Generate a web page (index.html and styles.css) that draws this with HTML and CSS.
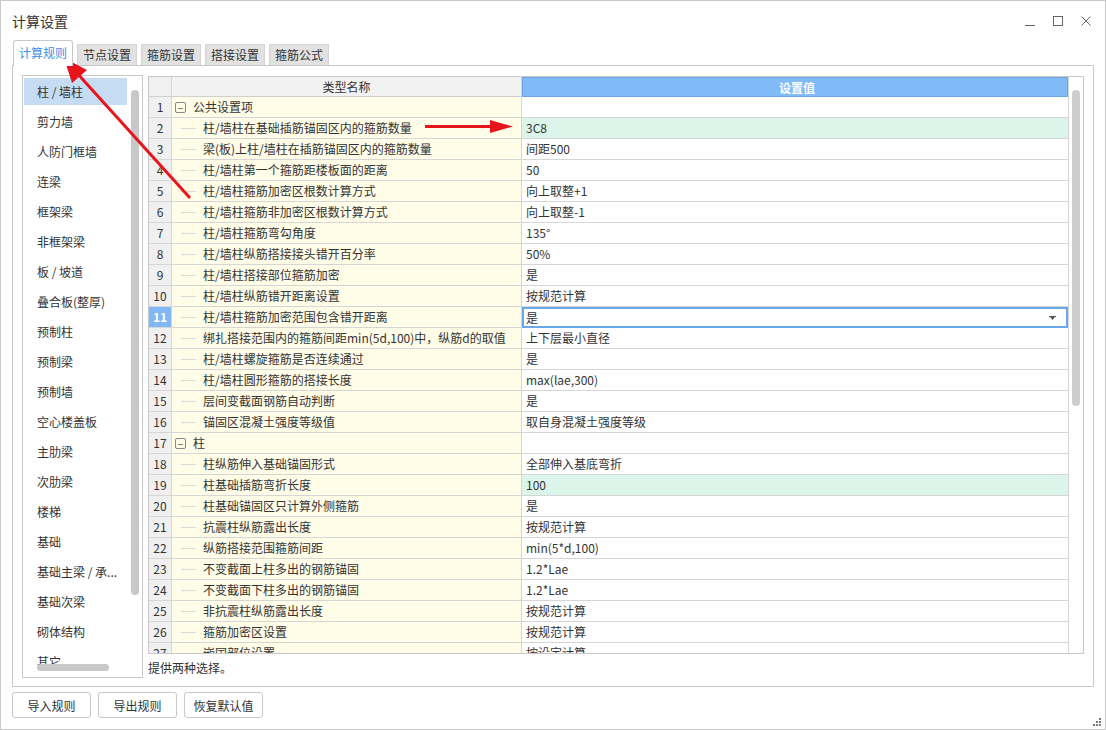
FILE: index.html
```html
<!DOCTYPE html>
<html lang="zh">
<head>
<meta charset="utf-8">
<title>计算设置</title>
<link rel="stylesheet" href="styles.css">
</head>
<body>
<div class="window">
  <div class="titlebar">
    <div class="title">计算设置</div>
    <div class="controls">
      <svg class="ctl" width="14" height="14" viewBox="0 0 14 14"><path d="M2 11.5H12" stroke="#666" stroke-width="1"/></svg>
      <svg class="ctl" width="14" height="14" viewBox="0 0 14 14"><rect x="2.5" y="2.5" width="9" height="9" fill="none" stroke="#666" stroke-width="1"/></svg>
      <svg class="ctl" width="14" height="14" viewBox="0 0 14 14"><path d="M2.5 2.5L11.5 11.5M11.5 2.5L2.5 11.5" stroke="#666" stroke-width="1"/></svg>
    </div>
  </div>
  <div class="tabs">
    <div class="tab active">计算规则</div>
    <div class="tab">节点设置</div>
    <div class="tab">箍筋设置</div>
    <div class="tab">搭接设置</div>
    <div class="tab">箍筋公式</div>
  </div>
  <div class="panel">
    <div class="list">
      <div class="list-items">
        <div class="item selected">柱 / 墙柱</div>
        <div class="item">剪力墙</div>
        <div class="item">人防门框墙</div>
        <div class="item">连梁</div>
        <div class="item">框架梁</div>
        <div class="item">非框架梁</div>
        <div class="item">板 / 坡道</div>
        <div class="item">叠合板(整厚)</div>
        <div class="item">预制柱</div>
        <div class="item">预制梁</div>
        <div class="item">预制墙</div>
        <div class="item">空心楼盖板</div>
        <div class="item">主肋梁</div>
        <div class="item">次肋梁</div>
        <div class="item">楼梯</div>
        <div class="item">基础</div>
        <div class="item">基础主梁 / 承...</div>
        <div class="item">基础次梁</div>
        <div class="item">砌体结构</div>
        <div class="item">其它</div>
      </div>
      <div class="vscroll-l"><div class="thumb-l"></div></div>
      <div class="hscroll-l"><div class="hthumb-l"></div></div>
    </div>
    <div class="right">
      <div class="table">
        <div class="tmain">
          <div class="row head">
            <div class="c-num"></div>
            <div class="c-name hname">类型名称</div>
            <div class="c-val hval">设置值</div>
          </div>
          <div class="tbody">
            <div class="row group"><div class="c-num">1</div><div class="c-name"><span class="box">−</span>公共设置项</div><div class="c-val"></div></div>
            <div class="row"><div class="c-num">2</div><div class="c-name"><span class="line"></span>柱/墙柱在基础插筋锚固区内的箍筋数量</div><div class="c-val green">3C8</div></div>
            <div class="row"><div class="c-num">3</div><div class="c-name"><span class="line"></span>梁(板)上柱/墙柱在插筋锚固区内的箍筋数量</div><div class="c-val">间距500</div></div>
            <div class="row"><div class="c-num">4</div><div class="c-name"><span class="line"></span>柱/墙柱第一个箍筋距楼板面的距离</div><div class="c-val">50</div></div>
            <div class="row"><div class="c-num">5</div><div class="c-name"><span class="line"></span>柱/墙柱箍筋加密区根数计算方式</div><div class="c-val">向上取整+1</div></div>
            <div class="row"><div class="c-num">6</div><div class="c-name"><span class="line"></span>柱/墙柱箍筋非加密区根数计算方式</div><div class="c-val">向上取整-1</div></div>
            <div class="row"><div class="c-num">7</div><div class="c-name"><span class="line"></span>柱/墙柱箍筋弯勾角度</div><div class="c-val">135°</div></div>
            <div class="row"><div class="c-num">8</div><div class="c-name"><span class="line"></span>柱/墙柱纵筋搭接接头错开百分率</div><div class="c-val">50%</div></div>
            <div class="row"><div class="c-num">9</div><div class="c-name"><span class="line"></span>柱/墙柱搭接部位箍筋加密</div><div class="c-val">是</div></div>
            <div class="row"><div class="c-num">10</div><div class="c-name"><span class="line"></span>柱/墙柱纵筋错开距离设置</div><div class="c-val">按规范计算</div></div>
            <div class="row current"><div class="c-num">11</div><div class="c-name"><span class="line"></span>柱/墙柱箍筋加密范围包含错开距离</div><div class="c-val editing">是<svg class="drop" width="7" height="4" viewBox="0 0 7 4"><path d="M0 0H7V1H6L3.5 4L1 1H0Z" fill="#555"/></svg></div></div>
            <div class="row"><div class="c-num">12</div><div class="c-name"><span class="line"></span>绑扎搭接范围内的箍筋间距min(5d,100)中，纵筋d的取值</div><div class="c-val">上下层最小直径</div></div>
            <div class="row"><div class="c-num">13</div><div class="c-name"><span class="line"></span>柱/墙柱螺旋箍筋是否连续通过</div><div class="c-val">是</div></div>
            <div class="row"><div class="c-num">14</div><div class="c-name"><span class="line"></span>柱/墙柱圆形箍筋的搭接长度</div><div class="c-val">max(lae,300)</div></div>
            <div class="row"><div class="c-num">15</div><div class="c-name"><span class="line"></span>层间变截面钢筋自动判断</div><div class="c-val">是</div></div>
            <div class="row"><div class="c-num">16</div><div class="c-name"><span class="line"></span>锚固区混凝土强度等级值</div><div class="c-val">取自身混凝土强度等级</div></div>
            <div class="row group"><div class="c-num">17</div><div class="c-name"><span class="box">−</span>柱</div><div class="c-val"></div></div>
            <div class="row"><div class="c-num">18</div><div class="c-name"><span class="line"></span>柱纵筋伸入基础锚固形式</div><div class="c-val">全部伸入基底弯折</div></div>
            <div class="row"><div class="c-num">19</div><div class="c-name"><span class="line"></span>柱基础插筋弯折长度</div><div class="c-val green">100</div></div>
            <div class="row"><div class="c-num">20</div><div class="c-name"><span class="line"></span>柱基础锚固区只计算外侧箍筋</div><div class="c-val">是</div></div>
            <div class="row"><div class="c-num">21</div><div class="c-name"><span class="line"></span>抗震柱纵筋露出长度</div><div class="c-val">按规范计算</div></div>
            <div class="row"><div class="c-num">22</div><div class="c-name"><span class="line"></span>纵筋搭接范围箍筋间距</div><div class="c-val">min(5*d,100)</div></div>
            <div class="row"><div class="c-num">23</div><div class="c-name"><span class="line"></span>不变截面上柱多出的钢筋锚固</div><div class="c-val">1.2*Lae</div></div>
            <div class="row"><div class="c-num">24</div><div class="c-name"><span class="line"></span>不变截面下柱多出的钢筋锚固</div><div class="c-val">1.2*Lae</div></div>
            <div class="row"><div class="c-num">25</div><div class="c-name"><span class="line"></span>非抗震柱纵筋露出长度</div><div class="c-val">按规范计算</div></div>
            <div class="row"><div class="c-num">26</div><div class="c-name"><span class="line"></span>箍筋加密区设置</div><div class="c-val">按规范计算</div></div>
            <div class="row"><div class="c-num">27</div><div class="c-name"><span class="line"></span>嵌固部位设置</div><div class="c-val">按设定计算</div></div>
          </div>
        </div>
        <div class="vscroll"><div class="thumb"></div></div>
      </div>
      <div class="hint">提供两种选择。</div>
    </div>
  </div>
  <div class="buttons">
    <button class="btn">导入规则</button>
    <button class="btn">导出规则</button>
    <button class="btn">恢复默认值</button>
  </div>
  <svg class="grip" width="8" height="8" viewBox="0 0 8 8"><g fill="#777"><rect x="6" y="0" width="2" height="2"/><rect x="3" y="3" width="2" height="2"/><rect x="6" y="3" width="2" height="2"/><rect x="0" y="6" width="2" height="2"/><rect x="3" y="6" width="2" height="2"/><rect x="6" y="6" width="2" height="2"/></g></svg>
  <svg class="arrows" width="1106" height="730" viewBox="0 0 1106 730">
    <g stroke="#e8141c" stroke-width="3" fill="#e8141c">
      <line x1="190" y1="198" x2="76" y2="72"/>
      <line x1="425" y1="126.5" x2="494" y2="126.5"/>
    </g>
    <g fill="#e8141c">
      <polygon points="64,58 87,70 72,83"/>
      <polygon points="513,126.5 490,120 490,133"/>
    </g>
  </svg>
</div>
</body>
</html>
```

FILE: styles.css
```css
* { box-sizing: border-box; }
html, body { margin: 0; padding: 0; background: #fff; }
body {
  font-family: "Noto Sans CJK SC", "Noto Sans", sans-serif;
  font-size: 12px;
  color: #333;
}
.window {
  position: relative;
  width: 1106px;
  height: 730px;
  border: 1px solid #c8c8c8;
  background: #fff;
  overflow: hidden;
}
.titlebar {
  height: 39px;
  display: flex;
  align-items: center;
  justify-content: space-between;
  padding: 0 11px 0 11px;
}
.title { font-size: 14px; color: #333; line-height: 20px; }
.controls { display: flex; gap: 14px; padding-right: 1px; }
.ctl { display: block; }
.tabs {
  display: flex;
  align-items: flex-end;
  height: 25px;
  padding-left: 12px;
  gap: 4px;
}
.tab {
  height: 21px;
  padding: 0 5px;
  background: #e1e1e1;
  border: 1px solid #d4d4d4;
  border-bottom: none;
  line-height: 20px;
  color: #333;
  font-size: 12px;
}
.tab.active {
  height: 26px;
  margin-bottom: -1px;
  background: #fff;
  border-color: #c8c8c8;
  border-radius: 3px 3px 0 0;
  color: #3a8ee6;
  line-height: 24px;
  padding: 0 5px;
  position: relative;
  z-index: 1;
}
.panel {
  margin-left: 11px;
  width: 1082px;
  height: 622px;
  border: 1px solid #c8c8c8;
  display: flex;
  padding: 9px 9px 0 9px;
  gap: 5px;
}
.list {
  width: 121px;
  height: 603px;
  border: 1px solid #c8c8c8;
  position: relative;
  overflow: hidden;
}
.list-items { padding: 2px 0 0 1px; width: 104px; }
.item {
  height: 27px;
  margin-bottom: 3px;
  line-height: 27px;
  padding-left: 13px;
  white-space: nowrap;
  color: #333;
}
.item.selected { background: #c5dcf2; }
.vscroll-l {
  position: absolute;
  right: 3px;
  top: 14px;
  width: 8px;
  height: 505px;
}
.thumb-l { width: 8px; height: 100%; background: #c8c8c8; border-radius: 4px; }
.hscroll-l {
  position: absolute;
  left: 14px;
  bottom: 6px;
  width: 72px;
  height: 7px;
}
.hthumb-l { width: 100%; height: 100%; background: #c8c8c8; border-radius: 4px; }
.right { display: flex; flex-direction: column; flex: 1; }
.table {
  width: 936px;
  height: 578px;
  margin-top: 1px;
  border: 1px solid #c8c8c8;
  display: flex;
}
.tmain { width: 919px; display: flex; flex-direction: column; }
.row {
  display: grid;
  grid-template-columns: 23px 350px 1fr;
  height: 21px;
  flex-shrink: 0;
}
.row > div {
  border-bottom: 1px solid #d6d6d6;
  line-height: 20px;
  white-space: nowrap;
  overflow: hidden;
}
.c-num {
  background: #f0f0f0;
  border-right: 1px solid #d6d6d6;
  text-align: center;
  font-size: 12px;
}
.c-name {
  background: #fffce8;
  border-right: 1px solid #d6d6d6;
  display: flex;
  align-items: center;
}
.c-val { background: #fff; padding-left: 4px; }
.c-val.green { background: #dcf5ea; }
.row.head { height: 20px; }
.row.head > div { border-bottom: 1px solid #d0d0d0; line-height: 19px; }
.row.head .c-num { background: #f0f0f0; }
.hname { background: #f2f2f2 !important; justify-content: center; }
.hval {
  background: #80bbf8 !important;
  color: #fff;
  font-weight: bold;
  text-align: center;
  border: 1px solid #6aa6e6;
  border-bottom-color: #6aa6e6 !important;
}
.tbody { flex: 1; overflow: hidden; }
.line {
  display: inline-block;
  width: 15px;
  height: 1px;
  background: #d9d9d9;
  margin: 0 7px 0 9px;
  flex-shrink: 0;
}
.box {
  display: inline-flex;
  align-items: center;
  justify-content: center;
  width: 11px;
  height: 11px;
  border: 1px solid #888;
  border-radius: 2px;
  font-size: 10px;
  line-height: 9px;
  margin: 0 7px 0 3px;
  color: #555;
  flex-shrink: 0;
}
.row.current .c-num { background: #7fb8f5; color: #fff; font-weight: bold; }
.c-val.editing {
  border: 2px solid #68a7ea;
  line-height: 17px;
  padding-left: 2px;
  display: flex;
  align-items: center;
  justify-content: space-between;
  padding-right: 10px;
}
.drop { display: block; }
.vscroll {
  width: 15px;
  border-left: 1px solid #d6d6d6;
  padding: 13px 0 0 3px;
}
.thumb { width: 8px; height: 316px; background: #cdcdcd; border-radius: 4px; }
.hint { margin-top: 5px; line-height: 18px; color: #333; }
.buttons {
  display: flex;
  gap: 7px;
  padding: 5px 0 0 11px;
}
.btn {
  width: 79px;
  height: 26px;
  border: 1px solid #c8c8c8;
  border-radius: 3px;
  background: #fff;
  font-family: "Noto Sans CJK SC", "Noto Sans", sans-serif;
  font-size: 12px;
  color: #333;
  padding: 0;
}
.grip { position: absolute; right: 4px; bottom: 3px; }
.arrows { position: absolute; left: -1px; top: -1px; pointer-events: none; }
```
